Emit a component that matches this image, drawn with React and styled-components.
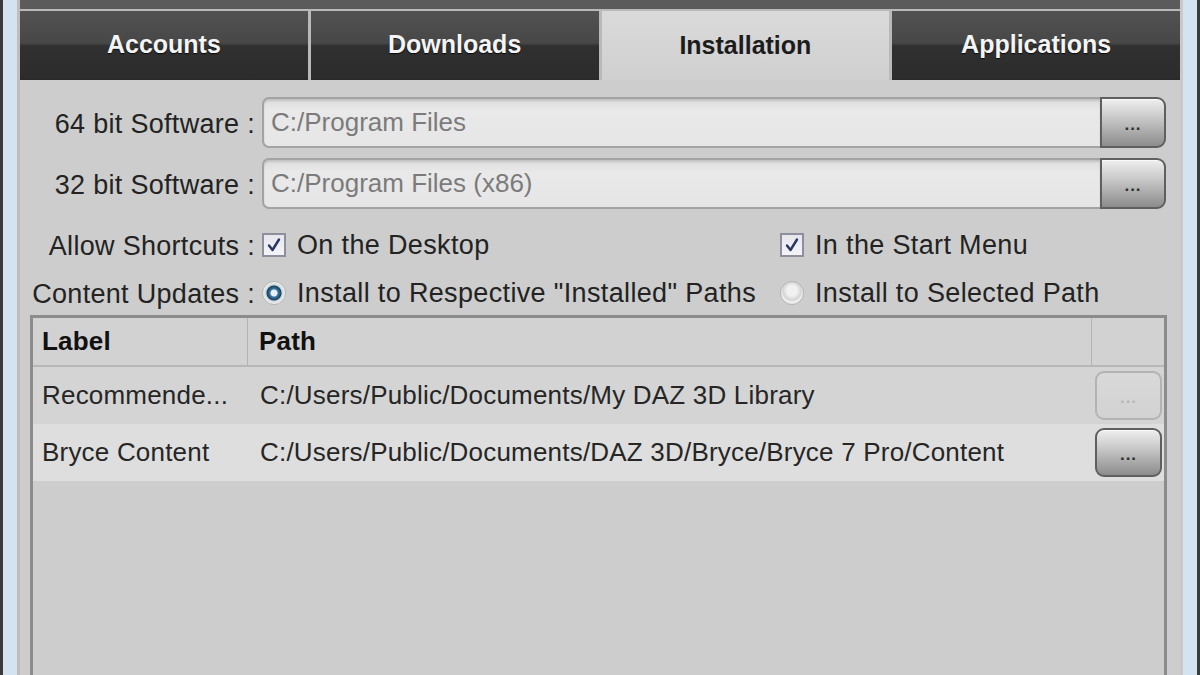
import React from "react";
import styled, { createGlobalStyle } from "styled-components";

const GlobalStyle = createGlobalStyle`
  html, body {
    margin: 0;
    padding: 0;
    background: #cdcdcd;
  }
  body {
    font-family: "Liberation Sans", Arial, sans-serif;
  }
`;

const Window = styled.div`
  display: flex;
  width: 1200px;
  height: 675px;
  overflow: hidden;
`;

const FrameEdge = styled.div`
  width: 20px;
  flex: none;
  background: ${(props) =>
    props.$side === "left"
      ? "linear-gradient(to right, #3a3a3a 0 3px, #d3e3f0 3px 17px, #c4bcb8 17px 20px)"
      : "linear-gradient(to left, #3a3a3a 0 3px, #d3e3f0 3px 17px, #c9c9c9 17px 20px)"};
`;

const Main = styled.div`
  flex: 1;
  display: flex;
  flex-direction: column;
  background: #cdcdcd;
  min-width: 0;
`;

const TopStrip = styled.div`
  height: 9px;
  background: #5b5b5b;
  border-bottom: 2px solid #b9b9b9;
`;

const TabBar = styled.div`
  display: grid;
  grid-template-columns: repeat(4, 1fr);
  column-gap: 3px;
  height: 69px;
  background: #b9b9b9;
`;

const Tab = styled.div`
  display: flex;
  align-items: center;
  justify-content: center;
  font-size: 25px;
  font-weight: 700;
  color: ${(props) => (props.$active ? "#1c1c1c" : "#f4f4f4")};
  text-shadow: ${(props) =>
    props.$active ? "none" : "0 1px 1px rgba(0,0,0,0.8)"};
  background: ${(props) =>
    props.$active
      ? "linear-gradient(#dadada, #d0d0d0)"
      : "linear-gradient(#525252 0%, #474747 48%, #303030 52%, #2c2c2c 100%)"};
  border-bottom: ${(props) => (props.$active ? "none" : "2px solid #2a2a2a")};
`;

const Panel = styled.div`
  flex: 1;
  display: flex;
  flex-direction: column;
  padding-top: 17px;
  min-height: 0;
`;

const FormRow = styled.div`
  display: grid;
  grid-template-columns: 235px 1fr;
  column-gap: 7px;
  align-items: center;
  padding-right: 14px;
  height: ${(props) => props.$h}px;
  margin-top: ${(props) => props.$mt || 0}px;
`;

const Label = styled.div`
  text-align: right;
  font-size: 27px;
  letter-spacing: 0.3px;
  color: #232323;
  white-space: nowrap;
  padding-top: 3px;
`;

const PathField = styled.div`
  display: flex;
  height: 100%;
`;

const PathInput = styled.div`
  flex: 1;
  display: flex;
  align-items: center;
  padding-left: 7px;
  font-size: 26px;
  color: #7b7b7b;
  background: linear-gradient(#dcdcdc, #e9e9e9 25%, #e6e6e6);
  border: 2px solid #a3a3a3;
  border-right: none;
  border-radius: 7px 0 0 7px;
  box-shadow: inset 0 2px 2px rgba(0, 0, 0, 0.12);
`;

const BrowseButton = styled.div`
  width: ${(props) => props.$w || 66}px;
  height: ${(props) => props.$hgt || 51}px;
  box-sizing: border-box;
  flex: none;
  display: flex;
  align-items: center;
  justify-content: center;
  padding-top: 4px;
  font-size: 17px;
  font-weight: 700;
  letter-spacing: 1px;
  color: ${(props) => (props.$disabled ? "#b9b9b9" : "#2f2f2f")};
  background: ${(props) =>
    props.$disabled
      ? "linear-gradient(#d9d9d9, #d2d2d2)"
      : "linear-gradient(#efefef 0%, #c9c9c9 40%, #8c8c8c 100%)"};
  border: 2px solid ${(props) => (props.$disabled ? "#b3b3b3" : "#5f5f5f")};
  border-radius: ${(props) => props.$radius || "0 9px 9px 0"};
  box-shadow: ${(props) =>
    props.$disabled ? "none" : "inset 0 1px 0 rgba(255,255,255,0.7)"};
`;

const OptionGrid = styled.div`
  display: grid;
  grid-template-columns: 518px 1fr;
  align-items: center;
`;

const Option = styled.div`
  display: flex;
  align-items: center;
  gap: 11px;
  font-size: 27px;
  letter-spacing: 0.35px;
  color: #232323;
  white-space: nowrap;
`;

const CheckBox = styled.div`
  width: 20px;
  height: 20px;
  flex: none;
  border: 2px solid #8e8e9c;
  background: linear-gradient(#e6e7ee, #f4f4f8);
  display: flex;
  align-items: center;
  justify-content: center;
`;

const Radio = styled.div`
  width: 22px;
  height: 22px;
  flex: none;
  border-radius: 50%;
  border: 1px solid #b5b5b5;
  background: ${(props) =>
    props.$on
      ? "radial-gradient(circle at 50% 50%, #e8f1f7 0 3px, #3e7aa3 4px, #17425f 7px, #cfd6db 8px, #f2f2f2 11px)"
      : "radial-gradient(circle at 50% 40%, #f2f2f2 0 5px, #d5d5d5 9px, #ededed 11px)"};
`;

const Table = styled.div`
  flex: 1;
  margin: 13px 13px 0 10px;
  border: 3px solid #8c8c8c;
  border-bottom: none;
  background: #cdcdcd;
  display: flex;
  flex-direction: column;
`;

const TableRow = styled.div`
  display: grid;
  grid-template-columns: 215px 844px 1fr;
  height: ${(props) => props.$h}px;
  background: ${(props) => props.$bg};
  border-bottom: ${(props) => (props.$head ? "2px solid #b7b7b7" : "none")};
`;

const Cell = styled.div`
  display: flex;
  align-items: center;
  padding-left: ${(props) => props.$pl || 0}px;
  font-size: 26px;
  letter-spacing: 0.2px;
  font-weight: ${(props) => (props.$head ? 700 : 400)};
  color: ${(props) => (props.$head ? "#111" : "#262626")};
  border-right: ${(props) => (props.$divider ? "1px solid #b3b3b3" : "none")};
  min-width: 0;
  white-space: nowrap;
`;

const ActionCell = styled.div`
  display: flex;
  align-items: center;
  justify-content: center;
  padding-left: 1px;
`;

const Check = () => (
  <svg width="16" height="16" viewBox="0 0 16 16">
    <path
      d="M3 8.5 L6.5 13 L13 2.5"
      fill="none"
      stroke="#2a3560"
      strokeWidth="2.4"
      strokeLinecap="round"
      strokeLinejoin="round"
    />
  </svg>
);

const tabs = ["Accounts", "Downloads", "Installation", "Applications"];

const rows = [
  {
    label: "Recommende...",
    path: "C:/Users/Public/Documents/My DAZ 3D Library",
    bg: "#d4d4d4",
    disabled: true,
  },
  {
    label: "Bryce Content",
    path: "C:/Users/Public/Documents/DAZ 3D/Bryce/Bryce 7 Pro/Content",
    bg: "#dedede",
    disabled: false,
  },
];

export default function App() {
  return (
    <Window>
      <GlobalStyle />
      <FrameEdge $side="left" />
      <Main>
        <TopStrip />
        <TabBar>
          {tabs.map((t) => (
            <Tab key={t} $active={t === "Installation"}>
              {t}
            </Tab>
          ))}
        </TabBar>
        <Panel>
          <FormRow $h={51}>
            <Label>64 bit Software :</Label>
            <PathField>
              <PathInput>C:/Program Files</PathInput>
              <BrowseButton>...</BrowseButton>
            </PathField>
          </FormRow>
          <FormRow $h={51} $mt={10}>
            <Label>32 bit Software :</Label>
            <PathField>
              <PathInput>C:/Program Files (x86)</PathInput>
              <BrowseButton>...</BrowseButton>
            </PathField>
          </FormRow>
          <FormRow $h={26} $mt={19}>
            <Label>Allow Shortcuts :</Label>
            <OptionGrid>
              <Option>
                <CheckBox>
                  <Check />
                </CheckBox>
                On the Desktop
              </Option>
              <Option>
                <CheckBox>
                  <Check />
                </CheckBox>
                In the Start Menu
              </Option>
            </OptionGrid>
          </FormRow>
          <FormRow $h={26} $mt={22}>
            <Label>Content Updates :</Label>
            <OptionGrid>
              <Option>
                <Radio $on />
                Install to Respective "Installed" Paths
              </Option>
              <Option>
                <Radio />
                Install to Selected Path
              </Option>
            </OptionGrid>
          </FormRow>
          <Table>
            <TableRow $h={47} $bg="#d2d2d2" $head>
              <Cell $head $pl={9} $divider>
                Label
              </Cell>
              <Cell $head $pl={11} $divider>
                Path
              </Cell>
              <Cell />
            </TableRow>
            {rows.map((r) => (
              <TableRow key={r.label} $h={57} $bg={r.bg}>
                <Cell $pl={9}>{r.label}</Cell>
                <Cell $pl={12}>{r.path}</Cell>
                <ActionCell>
                  <BrowseButton
                    $w={67}
                    $hgt={49}
                    $radius="9px"
                    $disabled={r.disabled}
                  >
                    ...
                  </BrowseButton>
                </ActionCell>
              </TableRow>
            ))}
          </Table>
        </Panel>
      </Main>
      <FrameEdge $side="right" />
    </Window>
  );
}
